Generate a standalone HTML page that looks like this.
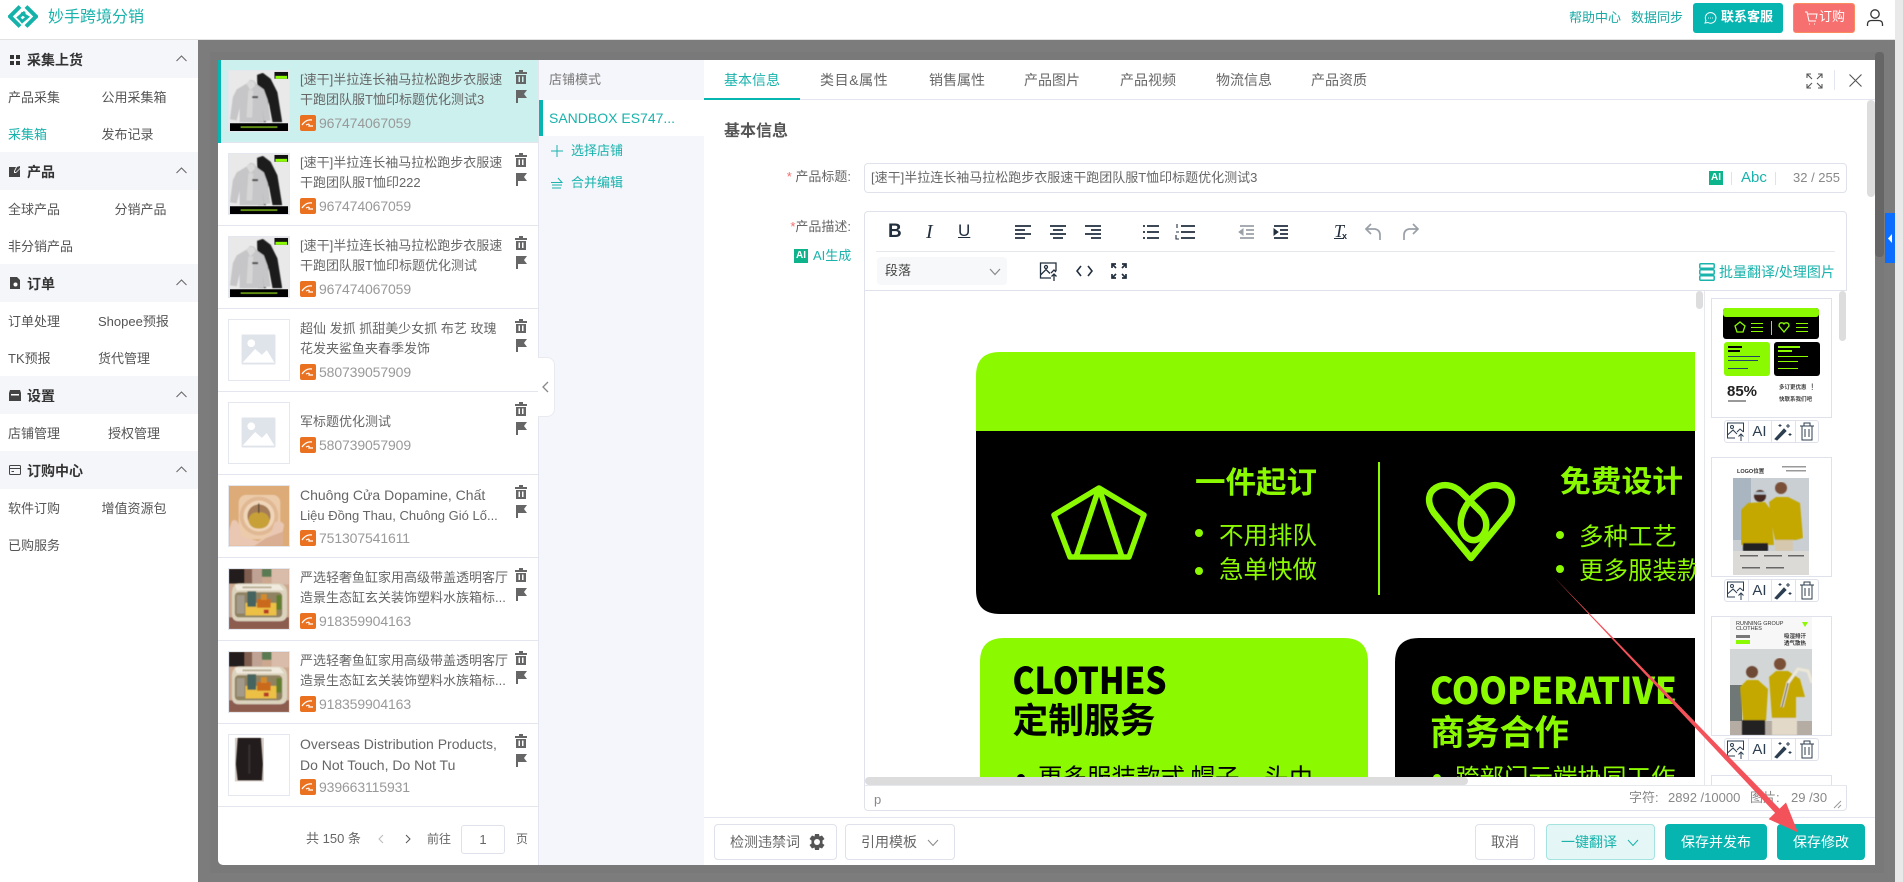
<!DOCTYPE html>
<html lang="zh-CN">
<head>
<meta charset="utf-8">
<title>妙手跨境分销</title>
<style>
html,body{margin:0;padding:0;width:1903px;height:882px;overflow:hidden;background:#fff;font-family:"Liberation Sans","Noto Sans CJK SC",sans-serif;color:#666}
*{box-sizing:border-box}
.a,.s,.it,.it>*,.tab,.btn,.lb{position:absolute}
.a,.s,.tab,.lb{white-space:nowrap}
.s{font-size:13px;line-height:20px;color:#555;margin-top:1px}
.sec{position:absolute;left:0;width:198px;height:38px;background:#f5f6fa}
.sec b{position:absolute;left:27px;top:10px;font-size:14px;line-height:20px;color:#333;font-weight:700}
.sec svg{position:absolute}
.it{left:218px;width:320px;height:83px;background:#fff;border-bottom:1px solid #e3e6ee}
.th{left:10px;top:10px;width:62px;height:62px;border:1px solid #e4e7ed;background:#fff;display:block}
.tt{left:82px;top:10px;font-size:13px;line-height:20px;color:#666;white-space:nowrap}
.tt span{font-size:14px}
.ali{left:82px;top:55px;width:16px;height:16px}
.id{left:101px;top:53px;font-size:14px;line-height:20px;color:#999;letter-spacing:-.12px}
.tr{left:297px;top:10px;width:12px;height:14px}
.fl{left:298px;top:30px;width:11px;height:13px}
.tab{top:70px;font-size:14px;line-height:20px;color:#666}
.btn{border:1px solid #dfe2ea;border-radius:4px;background:#fff;font-size:14px;line-height:34px;text-align:center;color:#666;white-space:nowrap}
.pri{background:#06b4b0;border-color:#06b4b0;color:#fff}
.lb{font-size:13px;line-height:20px;color:#666}
.lb i{color:#f56c6c;font-style:normal}
.box{position:absolute;left:1711px;width:121px;border:1px solid #dfe2ea;background:#fff}
.act{position:absolute;left:1724px;width:95px;height:23px;border:1px solid #dfe2ea;border-radius:3px;background:#fff}
.act svg{position:absolute;left:-1px;top:-1px}
.act span{position:absolute;left:23px;top:1px;width:23px;text-align:center;font-size:15px;line-height:20px;color:#2c3e50}
.act u{position:absolute;top:0;width:1px;height:21px;background:#dfe2ea}
.st{position:absolute;top:788px;font-size:13px;line-height:20px;color:#888;white-space:nowrap}
</style>
</head>
<body>
<svg width="0" height="0" style="position:absolute">
<defs>
<filter id="soft" x="0" y="0" width="100%" height="100%"><feGaussianBlur stdDeviation=".45"/></filter>
<symbol id="shirt" viewBox="0 0 62 62">
<rect width="62" height="62" fill="#e9e9e9"/>
<g filter="url(#soft)">
<path d="M29 4 35 2 43 8 50 22 55 53 45 53 41 32 38 53H30Z" fill="#1d1d1d"/>
<path d="M18 13 22 9 26 10 29 14 36 19 40 30 43 51 36 52 35 38 36 53H11L11 38 8 51 1 50 4 27 8 19Z" fill="#c6c6c8"/>
<path d="M18 13 22 10 26 11 27 15 22 20Z" fill="#dadada"/>
<path d="M20 20 25 20 24 48 18 48Z" fill="#d6d6d7"/>
<rect x="24" y="26" width="6" height="2" fill="#444"/>
</g>
<rect x="1" y="54" width="60" height="8" fill="#000"/>
<rect x="12" y="57" width="38" height="2" fill="#5f8e12"/>
<rect x="47" y="1" width="14" height="7" fill="#111"/>
<rect x="48" y="5" width="12" height="3" fill="#8bfa00"/>
</symbol>
<symbol id="placeholder" viewBox="0 0 62 62">
<rect x="13" y="15" width="35" height="31" rx="1" fill="#dfe3ea"/>
<circle cx="23" cy="24" r="4" fill="#fff"/>
<path d="M14 44 27 30 34 36 39 31 47 44Z" fill="#fff"/>
</symbol>
<symbol id="bell" viewBox="0 0 62 62">
<rect width="62" height="62" fill="#dcab78"/>
<g filter="url(#soft)">
<rect x="10" y="9" width="43" height="46" rx="8" fill="#eccbaa"/>
<circle cx="31" cy="31" r="20" fill="#e0b894"/>
<circle cx="31" cy="31" r="16" fill="#f0d5b8"/>
<circle cx="31" cy="31" r="12" fill="#a47c58"/>
<path d="M20 36Q21 27 31 27T42 36Q40 44 31 44T20 36Z" fill="#c8a038"/>
<rect x="30" y="18" width="1.500" height="10" fill="#5d4a30"/>
<path d="M0 62V46L3 36Q8 33 10 40L13 52 30 57 43 50 47 38Q53 34 57 40L55 50 50 62Z" fill="#e9c7b2"/>
<path d="M26 62 38 54 56 47V62Z" fill="#d9ae92"/>
</g>
</symbol>
<symbol id="tank" viewBox="0 0 62 62">
<rect width="62" height="62" fill="#cba88f"/>
<g filter="url(#soft)">
<rect width="16" height="15" fill="#231d1a"/>
<rect x="16" width="8" height="15" fill="#7f5d4f"/>
<rect x="24" width="10" height="15" fill="#bfa294"/>
<rect x="34" width="10" height="8" fill="#5a7a52"/>
<rect x="44" width="18" height="16" fill="#d9bca9"/>
<rect y="50" width="62" height="12" fill="#8c5b50"/>
<path d="M3 25Q3 15 12 15H50Q60 15 60 25V46Q60 54 52 54H10Q3 54 3 46Z" fill="#dcd3be"/>
<path d="M6 16H52L57 22H8Z" fill="#f1ebdf"/>
<rect x="14" y="18" width="30" height="2" fill="#b9ad96"/>
<rect x="6" y="24" width="49" height="26" rx="4" fill="#8f8260"/>
<rect x="17" y="35" width="32" height="13" fill="#ecc044"/>
<rect x="19" y="23" width="9" height="16" fill="#45645f"/>
<rect x="29" y="31" width="14" height="9" fill="#c9691f"/>
<rect x="33" y="26" width="6" height="6" fill="#d68b2a"/>
<rect x="8" y="27" width="8" height="19" fill="#a39a8c"/>
<rect x="49" y="27" width="5" height="15" fill="#5f7d2e"/>
<rect x="36" y="42" width="5" height="4" fill="#b8382a"/>
</g>
</symbol>
<symbol id="dress" viewBox="0 0 62 62">
<rect width="62" height="62" fill="#fff"/>
<rect x="6" y="3" width="30" height="45" fill="#d9cfc8"/>
<g filter="url(#soft)"><path d="M9 3H33L35 30 34 47H9L7 30Z" fill="#221e1c"/><rect x="20" y="10" width="2" height="30" fill="#3a3330"/></g>
</symbol>
<symbol id="ali" viewBox="0 0 16 16">
<rect width="16" height="16" rx="2" fill="#ea7120"/>
<path d="M2 10Q6 4 12 5M6 10Q10 8 9 11H13" fill="none" stroke="#fff" stroke-width="1.200"/>
</symbol>
<symbol id="trash" viewBox="0 0 12 14">
<path d="M4 0H8V2H12V4H0V2H4ZM1 5H11V14H1ZM3.500 6.500V12H5V6.500ZM7 6.500V12H8.500V6.500Z" fill="#666" fill-rule="evenodd"/>
</symbol>
<symbol id="flag" viewBox="0 0 11 13">
<path d="M0 0H11L8 4 11 8H2V13H0Z" fill="#666"/>
</symbol>
</defs>
</svg>

<!-- header -->
<div class="a" style="left:0;top:0;width:1895px;height:40px;background:#fff;border-bottom:1px solid #e2e2e2"></div>
<svg class="a" style="left:8px;top:5px" width="30" height="24" viewBox="0 0 30 24" fill="none" stroke="#15b2aa" stroke-width="4">
<path d="M12 1.500 2 11.500 12 21.500"/><path d="M18 1.500 28 11.500 18 21.500"/><path d="M17 7 10.500 12.500 14 16M13 8 19.500 12 13 17.500" stroke-width="3"/>
</svg>
<div class="a" style="left:48px;top:6px;font-size:16px;line-height:24px;color:#19b3ac">妙手跨境分销</div>
<div class="a" style="left:1569px;top:8px;font-size:13px;line-height:20px;color:#19a9a4">帮助中心</div>
<div class="a" style="left:1631px;top:8px;font-size:13px;line-height:20px;color:#19a9a4">数据同步</div>
<div class="a" style="left:1693px;top:3px;width:90px;height:30px;background:#06b4b0;border-radius:3px"></div>
<svg class="a" style="left:1703px;top:11px" width="14" height="14" viewBox="0 0 14 14" fill="none" stroke="#fff"><path d="M2 12 3 9.500A5.300 5.300 0 1 1 5 11.500Z"/><path d="M5 7H5.800M7 7H7.800M9 7H9.800"/></svg>
<div class="a" style="left:1721px;top:7px;font-size:13px;line-height:20px;color:#fff;font-weight:700">联系客服</div>
<div class="a" style="left:1793px;top:3px;width:62px;height:30px;background:#f67070;border:1px solid #f98b5f;border-radius:3px"></div>
<svg class="a" style="left:1804px;top:10px" width="14" height="16" viewBox="0 0 14 16" fill="none" stroke="#fff"><path d="M1 2H3L5 11H12M4 4H13L12 9"/><path d="M5 14H6M10 14H11"/></svg>
<div class="a" style="left:1819px;top:7px;font-size:13px;line-height:20px;color:#fff">订购</div>
<svg class="a" style="left:1866px;top:8px" width="18" height="19" viewBox="0 0 18 19" fill="none" stroke="#333" stroke-width="1.300"><circle cx="9" cy="6" r="4.200"/><path d="M1.500 18V16Q1.500 12.500 6 12.500H12Q16.500 12.500 16.500 16V18"/></svg>

<!-- sidebar -->
<div class="sec" style="top:40px"><svg style="left:10px;top:15px" width="10" height="10"><path d="M0 0H4V4H0ZM6 0H10V4H6ZM0 6H4V10H0ZM6 6H10V10H6Z" fill="#333"/></svg><b>采集上货</b><svg style="left:176px;top:15px" width="11" height="7"><path d="M.5 6 5.500 1 10.500 6" fill="none" stroke="#666"/></svg></div>
<div class="s" style="left:8px;top:87px">产品采集</div><div class="s" style="left:101.500px;top:87px">公用采集箱</div>
<div class="s" style="left:8px;top:124px;color:#19b3ac">采集箱</div><div class="s" style="left:101.500px;top:124px">发布记录</div>
<div class="sec" style="top:152px"><svg style="left:9px;top:14px" width="12" height="11"><path d="M0 1H7L5 5V7H7L11 3V11H0ZM8 1 11 0 11 2 7 6H6V5Z" fill="#444"/></svg><b>产品</b><svg style="left:176px;top:15px" width="11" height="7"><path d="M.5 6 5.500 1 10.500 6" fill="none" stroke="#666"/></svg></div>
<div class="s" style="left:8px;top:199px">全球产品</div><div class="s" style="left:114.500px;top:199px">分销产品</div>
<div class="s" style="left:8px;top:236px">非分销产品</div>
<div class="sec" style="top:264px"><svg style="left:10px;top:13px" width="10" height="12"><path d="M0 0H7L10 3V12H0Z" fill="#444"/><circle cx="5.500" cy="7.500" r="2" fill="#fff"/></svg><b>订单</b><svg style="left:176px;top:15px" width="11" height="7"><path d="M.5 6 5.500 1 10.500 6" fill="none" stroke="#666"/></svg></div>
<div class="s" style="left:8px;top:311px">订单处理</div><div class="s" style="left:98px;top:311px">Shopee预报</div>
<div class="s" style="left:8px;top:348px">TK预报</div><div class="s" style="left:98px;top:348px">货代管理</div>
<div class="sec" style="top:376px"><svg style="left:9px;top:14px" width="12" height="11"><path d="M1 0H11L12 3V11H0V3Z" fill="#444"/><rect x="2" y="4" width="8" height="1.500" fill="#fff"/></svg><b>设置</b><svg style="left:176px;top:15px" width="11" height="7"><path d="M.5 6 5.500 1 10.500 6" fill="none" stroke="#666"/></svg></div>
<div class="s" style="left:8px;top:423px">店铺管理</div><div class="s" style="left:108px;top:423px">授权管理</div>
<div class="sec" style="top:451px"><svg style="left:9px;top:14px" width="12" height="11" fill="none" stroke="#444"><rect x=".5" y=".5" width="11" height="9" rx="1"/><path d="M1 3.500H11M2.500 6.500H5"/></svg><b>订购中心</b><svg style="left:176px;top:15px" width="11" height="7"><path d="M.5 6 5.500 1 10.500 6" fill="none" stroke="#666"/></svg></div>
<div class="s" style="left:8px;top:498px">软件订购</div><div class="s" style="left:101.500px;top:498px">增值资源包</div>
<div class="s" style="left:8px;top:535px">已购服务</div>

<!-- overlay -->
<div class="a" style="left:198px;top:40px;width:1697px;height:842px;background:#7c7c7c"></div>
<div class="a" style="left:210px;top:52px;width:1674px;height:821px;background:#797979"></div>
<div class="a" style="left:1895px;top:0;width:8px;height:882px;background:#e9e9e9"></div>
<div class="a" style="left:1875px;top:52px;width:9px;height:205px;background:#666;border-radius:4px"></div>
<div class="a" style="left:1885px;top:213px;width:10px;height:50px;background:#0d6efd"></div>
<svg class="a" style="left:1888px;top:234px" width="5" height="9"><path d="M4 0V9L0 4.500Z" fill="#fff"/></svg>

<!-- modal -->
<div class="a" style="left:218px;top:60px;width:1657px;height:805px;background:#fff;border-radius:0 0 0 5px"></div>
<div class="a" style="left:538px;top:60px;width:166px;height:805px;background:#f5f6fb;border-left:1px solid #e3e6ee"></div>

<!-- list -->
<div class="it" style="top:60px;background:#cbf0ee"><svg class="th"><use href="#shirt"/></svg><div class="tt">[速干]半拉连长袖马拉松跑步衣服速<br>干跑团队服T恤印标题优化测试3</div><svg class="ali"><use href="#ali"/></svg><div class="id">967474067059</div><svg class="tr"><use href="#trash"/></svg><svg class="fl"><use href="#flag"/></svg></div>
<div class="a" style="left:218px;top:60px;width:3px;height:83px;background:#06b4b0"></div>
<div class="it" style="top:143px"><svg class="th"><use href="#shirt"/></svg><div class="tt">[速干]半拉连长袖马拉松跑步衣服速<br>干跑团队服T恤印222</div><svg class="ali"><use href="#ali"/></svg><div class="id">967474067059</div><svg class="tr"><use href="#trash"/></svg><svg class="fl"><use href="#flag"/></svg></div>
<div class="it" style="top:226px"><svg class="th"><use href="#shirt"/></svg><div class="tt">[速干]半拉连长袖马拉松跑步衣服速<br>干跑团队服T恤印标题优化测试</div><svg class="ali"><use href="#ali"/></svg><div class="id">967474067059</div><svg class="tr"><use href="#trash"/></svg><svg class="fl"><use href="#flag"/></svg></div>
<div class="it" style="top:309px"><svg class="th"><use href="#placeholder"/></svg><div class="tt">超仙 发抓 抓甜美少女抓 布艺 玫瑰<br>花发夹鲨鱼夹春季发饰</div><svg class="ali"><use href="#ali"/></svg><div class="id">580739057909</div><svg class="tr"><use href="#trash"/></svg><svg class="fl"><use href="#flag"/></svg></div>
<div class="it" style="top:392px"><svg class="th"><use href="#placeholder"/></svg><div class="tt" style="top:20px">军标题优化测试</div><svg class="ali" style="top:45px"><use href="#ali"/></svg><div class="id" style="top:43px">580739057909</div><svg class="tr"><use href="#trash"/></svg><svg class="fl"><use href="#flag"/></svg></div>
<div class="it" style="top:475px"><svg class="th"><use href="#bell"/></svg><div class="tt"><span>Chuông Cửa Dopamine, Chất</span><br>Liệu Đồng Thau, Chuông Gió Lố...</div><svg class="ali"><use href="#ali"/></svg><div class="id">751307541611</div><svg class="tr"><use href="#trash"/></svg><svg class="fl"><use href="#flag"/></svg></div>
<div class="it" style="top:558px"><svg class="th"><use href="#tank"/></svg><div class="tt">严选轻奢鱼缸家用高级带盖透明客厅<br>造景生态缸玄关装饰塑料水族箱标...</div><svg class="ali"><use href="#ali"/></svg><div class="id">918359904163</div><svg class="tr"><use href="#trash"/></svg><svg class="fl"><use href="#flag"/></svg></div>
<div class="it" style="top:641px"><svg class="th"><use href="#tank"/></svg><div class="tt">严选轻奢鱼缸家用高级带盖透明客厅<br>造景生态缸玄关装饰塑料水族箱标...</div><svg class="ali"><use href="#ali"/></svg><div class="id">918359904163</div><svg class="tr"><use href="#trash"/></svg><svg class="fl"><use href="#flag"/></svg></div>
<div class="it" style="top:724px"><svg class="th"><use href="#dress"/></svg><div class="tt"><span>Overseas Distribution Products,</span><br><span>Do Not Touch, Do Not Tu</span></div><svg class="ali"><use href="#ali"/></svg><div class="id">939663115931</div><svg class="tr"><use href="#trash"/></svg><svg class="fl"><use href="#flag"/></svg></div>

<!-- pagination -->
<div class="a" style="left:306px;top:829px;font-size:13px;line-height:20px;color:#666">共 150 条</div>
<svg class="a" style="left:378px;top:834px" width="6" height="10"><path d="M5 1 1 5 5 9" fill="none" stroke="#bbb"/></svg>
<svg class="a" style="left:405px;top:834px" width="6" height="10"><path d="M1 1 5 5 1 9" fill="none" stroke="#555"/></svg>
<div class="a" style="left:427px;top:829px;font-size:12px;line-height:20px;color:#666">前往</div>
<div class="a" style="left:461px;top:825px;width:44px;height:29px;border:1px solid #dfe2ea;border-radius:3px;text-align:center;font-size:13px;line-height:27px;color:#666">1</div>
<div class="a" style="left:516px;top:829px;font-size:12px;line-height:20px;color:#666">页</div>

<!-- collapse handle -->
<div class="a" style="left:538px;top:357px;width:17px;height:60px;background:#fff;border:1px solid #e8eaf0;border-left:0;border-radius:0 8px 8px 0"></div>
<svg class="a" style="left:542px;top:381px" width="7" height="12"><path d="M6 1 1 6 6 11" fill="none" stroke="#888" stroke-width="1.300"/></svg>

<!-- store panel -->
<div class="a" style="left:549px;top:70px;font-size:13px;line-height:20px;color:#777">店铺模式</div>
<div class="a" style="left:539px;top:100px;width:165px;height:36px;background:#fff"></div>
<div class="a" style="left:539px;top:100px;width:4px;height:36px;background:#06b4b0"></div>
<div class="a" style="left:549px;top:108px;font-size:14px;line-height:20px;color:#19b3ac">SANDBOX ES747...</div>
<svg class="a" style="left:551px;top:145px" width="12" height="12"><path d="M6 0V12M0 6H12" stroke="#19b3ac"/></svg>
<div class="a" style="left:571px;top:141px;font-size:13px;line-height:20px;color:#19b3ac">选择店铺</div>
<svg class="a" style="left:551px;top:177px" width="12" height="12" fill="none" stroke="#19b3ac"><path d="M0 5.500H11L7 1M1 8H11M1 11H10"/></svg>
<div class="a" style="left:571px;top:173px;font-size:13px;line-height:20px;color:#19b3ac">合并编辑</div>

<!-- tabs -->
<div class="a" style="left:704px;top:99px;width:1171px;height:1px;background:#e3e6ee"></div>
<div class="a" style="left:704px;top:98px;width:96px;height:2px;background:#06b4b0"></div>
<div class="tab" style="left:724px;color:#19b3ac">基本信息</div>
<div class="tab" style="left:820px;letter-spacing:.6px">类目&amp;属性</div>
<div class="tab" style="left:929px">销售属性</div>
<div class="tab" style="left:1024px">产品图片</div>
<div class="tab" style="left:1120px">产品视频</div>
<div class="tab" style="left:1216px">物流信息</div>
<div class="tab" style="left:1311px">产品资质</div>
<svg class="a" style="left:1806px;top:73px" width="17" height="16" fill="none" stroke="#555" stroke-width="1.100"><path d="M1 5V1H5M1 1 6 6M12 1H16V5M16 1 11 6M1 11V15H5M1 15 6 10M12 15H16V11M16 15 11 10"/></svg>
<div class="a" style="left:1834px;top:70px;width:1px;height:20px;background:#e3e6ee"></div>
<svg class="a" style="left:1849px;top:74px" width="13" height="13"><path d="M.5.500 12.500 12.500M12.500.500 .5 12.500" stroke="#555" stroke-width="1.100"/></svg>
<div class="a" style="left:1867px;top:100px;width:8px;height:97px;background:#ddd;border-radius:4px"></div>

<!-- form -->
<div class="a" style="left:724px;top:120px;font-size:16px;line-height:24px;font-weight:700;color:#555">基本信息</div>
<div class="lb" style="right:1052px;top:167px"><i>*</i> 产品标题:</div>
<div class="lb" style="right:1052px;top:217px"><i>*</i>产品描述:</div>
<svg class="a" style="left:794px;top:249px" width="14" height="14"><rect width="14" height="14" fill="#0db38a"/></svg>
<div class="a" style="left:796px;top:249px;font-size:10px;line-height:14px;font-weight:700;color:#fff">AI</div>
<div class="a" style="left:813px;top:246px;font-size:13px;line-height:20px;color:#19b3ac">AI生成</div>

<div class="a" style="left:864px;top:163px;width:983px;height:30px;border:1px solid #dfe2ea;border-radius:4px"></div>
<div class="a" style="left:871px;top:168px;font-size:13px;line-height:20px;color:#666">[速干]半拉连长袖马拉松跑步衣服速干跑团队服T恤印标题优化测试3</div>
<div class="a" style="left:1709px;top:171px;width:14px;height:14px;background:#0db38a;font-size:10px;line-height:14px;text-align:center;font-weight:700;color:#fff">AI</div>
<div class="a" style="left:1731px;top:172px;width:1px;height:13px;background:#dfe2ea"></div>
<div class="a" style="left:1741px;top:168px;font-size:15px;line-height:20px;color:#19b3ac">Abc</div>
<div class="a" style="left:1775px;top:172px;width:1px;height:13px;background:#dfe2ea"></div>
<div class="a" style="left:1793px;top:168px;font-size:13px;line-height:20px;color:#888">32 / 255</div>

<!-- editor -->
<div class="a" style="left:864px;top:211px;width:983px;height:600px;border:1px solid #dfe2ea;border-radius:4px"></div>
<div class="a" style="left:888px;top:221px;font-size:19px;line-height:22px;font-weight:700;color:#222f3e">B</div>
<div class="a" style="left:926px;top:221px;font-size:20px;line-height:22px;font-style:italic;color:#222f3e;font-family:'Liberation Serif',serif">I</div>
<div class="a" style="left:958px;top:220px;font-size:17px;line-height:22px;color:#222f3e;text-decoration:underline">U</div>
<svg class="a" style="left:1015px;top:224px" width="210" height="16" fill="none" stroke="#222f3e" stroke-width="1.800">
<path d="M0 2H16M0 6H10M0 10H16M0 14H10"/>
<path d="M35 2H51M38 6H48M35 10H51M38 14H48"/>
<path d="M70 2H86M76 6H86M70 10H86M76 14H86"/>
<path d="M132 2H144M132 8H144M132 14H144"/><path d="M128 2H130M128 8H130M128 14H130"/>
<path d="M166 2H180M166 8H180M166 14H180"/><path d="M162 0V4M161 8H164M161 11V15H164" stroke-width="1.100"/>
</svg>
<svg class="a" style="left:1238px;top:224px" width="52" height="16" fill="none" stroke-width="1.800">
<path d="M2 2H16M8 6H16M8 10H16M2 14H16" stroke="#9aa0a8"/><path d="M5 5 1 8 5 11Z" fill="#9aa0a8" stroke="#9aa0a8" stroke-width="1"/>
<path d="M36 2H50M42 6H50M42 10H50M36 14H50" stroke="#222f3e"/><path d="M36 5 40 8 36 11Z" fill="#222f3e" stroke="#222f3e" stroke-width="1"/>
</svg>
<div class="a" style="left:1334px;top:220px;font-size:18px;line-height:22px;font-style:italic;color:#222f3e;font-family:'Liberation Serif',serif;text-decoration:underline">T</div>
<div class="a" style="left:1342px;top:230px;font-size:9px;line-height:12px;color:#222f3e;font-weight:700">x</div>
<svg class="a" style="left:1365px;top:223px" width="56" height="18" fill="none" stroke="#9aa0a8" stroke-width="1.700">
<path d="M6 1 1 6 6 11M1 6H10Q15 7 15 12V17"/>
<path d="M48 1 53 6 48 11M53 6H44Q39 7 39 12V17"/>
</svg>
<div class="a" style="left:876px;top:251px;width:959px;height:1px;background:#e6e8ee"></div>
<div class="a" style="left:877px;top:257px;width:130px;height:28px;background:#f7f8f9;border-radius:4px"></div>
<div class="a" style="left:885px;top:261px;font-size:13px;line-height:20px;color:#444">段落</div>
<svg class="a" style="left:989px;top:268px" width="12" height="8"><path d="M1 1 6 6.500 11 1" fill="none" stroke="#888" stroke-width="1.200"/></svg>
<svg class="a" style="left:1039px;top:262px" width="20" height="19" fill="none" stroke="#222f3e" stroke-width="1.300"><path d="M12 16H1.500V1H17V9M1.500 13 7 7.500 11 11.500M12 11 15 8 17 10"/><circle cx="7" cy="5" r="1.500"/><path d="M15 19V12M12.500 14.500 15 12 17.500 14.500"/></svg>
<svg class="a" style="left:1076px;top:264px" width="17" height="14" fill="none" stroke="#222f3e" stroke-width="1.600"><path d="M5 2 1 7 5 12M12 2 16 7 12 12"/></svg>
<svg class="a" style="left:1111px;top:263px" width="16" height="16" fill="none" stroke="#222f3e" stroke-width="1.700"><path d="M1 5V1H5M1 1 5 5M11 1H15V5M15 1 11 5M1 11V15H5M1 15 5 11M11 15H15V11M15 15 11 11"/></svg>
<svg class="a" style="left:1699px;top:263px" width="16" height="18" fill="none" stroke="#19b3ac" stroke-width="1.500"><rect x=".8" y=".8" width="14.400" height="4.500" rx="1"/><rect x=".8" y="6.800" width="14.400" height="4.500" rx="1"/><rect x=".8" y="12.800" width="14.400" height="4.500" rx="1"/></svg>
<div class="a" style="left:1719px;top:262px;font-size:14px;line-height:20px;color:#19b3ac">批量翻译/处理图片</div>
<div class="a" style="left:865px;top:290px;width:981px;height:1px;background:#dfe2ea"></div>

<!-- editor image -->
<svg class="a" style="left:0;top:0" width="1903" height="882" viewBox="0 0 1903 882" font-family="'Noto Sans CJK SC','Liberation Sans',sans-serif">
<defs><clipPath id="ec"><rect x="865" y="291" width="830" height="486"/></clipPath></defs>
<g clip-path="url(#ec)">
<path d="M976 614V376Q976 352 1000 352H1760V431H976Z" fill="#8bfa00"/>
<path d="M976 431H1760V614H1000Q976 614 976 590Z" fill="#000"/>
<rect x="1378" y="462" width="2" height="133" fill="#8bfa00"/>
<g fill="none" stroke="#8bfa00" stroke-width="5.500" stroke-linejoin="round">
<path d="M1099 488 1144 515 1129 557H1070L1054 515Z"/><path d="M1099 488 1076 557M1099 488 1122 557"/>
<path stroke-width="6.500" d="M1471 558 1434 513C1418 490 1445 476 1461 492L1482 513C1494 528 1478 548 1466 537 1455 525 1462 505 1479 492 1495 476 1522 490 1508 513Z"/>
</g>
<g fill="#8bfa00">
<text x="1195" y="493" font-size="30" font-weight="700" textLength="122" lengthAdjust="spacingAndGlyphs">一件起订</text>
<circle cx="1199" cy="533" r="4"/><text x="1219" y="544" font-size="24.500" textLength="98" lengthAdjust="spacingAndGlyphs">不用排队</text>
<circle cx="1199" cy="571" r="4"/><text x="1219" y="578" font-size="24.500" textLength="98" lengthAdjust="spacingAndGlyphs">急单快做</text>
<text x="1560" y="492" font-size="30" font-weight="700" textLength="123" lengthAdjust="spacingAndGlyphs">免费设计</text>
<circle cx="1560" cy="535" r="4"/><text x="1579" y="545" font-size="24.500" textLength="98" lengthAdjust="spacingAndGlyphs">多种工艺</text>
<circle cx="1560" cy="569" r="4"/><text x="1579" y="579" font-size="24.500">更多服装款</text>
</g>
<path d="M980 790V662Q980 638 1004 638H1344Q1368 638 1368 662V790Z" fill="#8bfa00"/>
<path d="M1395 790V662Q1395 638 1419 638H1760V790Z" fill="#000"/>
<g fill="#000">
<text x="1012.500" y="694" font-size="37" font-weight="900" textLength="154" lengthAdjust="spacingAndGlyphs">CLOTHES</text>
<text x="1012.500" y="733" font-size="35" font-weight="700" textLength="143" lengthAdjust="spacingAndGlyphs">定制服务</text>
<circle cx="1021" cy="778" r="4"/><text x="1038" y="786" font-size="24.500">更多服装款式 帽子、头巾</text>
</g>
<g fill="#8bfa00">
<text x="1430" y="704" font-size="37" font-weight="900" textLength="247" lengthAdjust="spacingAndGlyphs">COOPERATIVE</text>
<text x="1430" y="745" font-size="35" font-weight="700" textLength="139" lengthAdjust="spacingAndGlyphs">商务合作</text>
<circle cx="1437" cy="778" r="4"/><text x="1455" y="786" font-size="24.500">跨部门云端协同工作</text>
</g>
</g>
</svg>
<div class="a" style="left:865px;top:777px;width:982px;height:8px;background:#fff"></div>
<div class="a" style="left:865px;top:777px;width:603px;height:8px;background:#dcdcdc;border-radius:4px"></div>

<!-- status bar -->
<div class="a" style="left:865px;top:785px;width:982px;height:1px;background:#e6e8ee"></div>
<div class="a" style="left:874px;top:790px;font-size:13px;line-height:20px;color:#888">p</div>
<div class="st" style="left:1629px">字符:</div>
<div class="st" style="left:1668px">2892 /10000</div>
<div class="st" style="left:1750px">图片:</div>
<div class="st" style="left:1791px">29 /30</div>
<svg class="a" style="left:1833px;top:800px" width="9" height="9"><path d="M1 8 8 1M5 8 8 5" stroke="#999"/></svg>

<!-- thumb panel -->
<div class="a" style="left:1704px;top:291px;width:143px;height:494px;background:#fff;border-left:1px solid #e6e8ee"></div>
<div class="a" style="left:1696px;top:291px;width:7px;height:18px;background:#ddd;border-radius:4px"></div>
<div class="a" style="left:1839px;top:291px;width:7px;height:50px;background:#ddd;border-radius:4px"></div>

<div class="box" style="top:298px;height:120px"></div>
<svg class="a" style="left:1712px;top:299px" width="119" height="118" viewBox="0 0 119 118">
<rect x="11" y="9" width="96" height="31" rx="3" fill="#000"/><rect x="11" y="9" width="96" height="9" rx="3" fill="#8bfa00"/>
<path d="M28 23 33 27 31 33H25L23 27Z" fill="none" stroke="#8bfa00" stroke-width="1.300"/><path d="M72 33 67 27Q67 23 71 24L72 25 73 24Q77 23 77 27Z" fill="none" stroke="#8bfa00" stroke-width="1.300"/>
<rect x="39" y="24" width="12" height="1" fill="#8bfa00"/><rect x="39" y="28" width="12" height="1" fill="#8bfa00"/><rect x="39" y="32" width="12" height="1" fill="#8bfa00"/>
<rect x="59" y="22" width="1" height="14" fill="#8bfa00"/>
<rect x="84" y="24" width="12" height="1" fill="#8bfa00"/><rect x="84" y="28" width="12" height="1" fill="#8bfa00"/><rect x="84" y="32" width="12" height="1" fill="#8bfa00"/>
<rect x="12" y="43" width="46" height="34" rx="3" fill="#8bfa00"/><rect x="62" y="43" width="46" height="34" rx="3" fill="#000"/>
<rect x="16" y="47" width="14" height="2" fill="#000"/><rect x="16" y="51" width="12" height="2" fill="#000"/><rect x="16" y="57" width="32" height="1" fill="#246"/><rect x="16" y="61" width="30" height="1" fill="#246"/><rect x="16" y="69" width="20" height="1" fill="#246"/>
<rect x="66" y="47" width="22" height="2" fill="#8bfa00"/><rect x="66" y="51" width="14" height="2" fill="#8bfa00"/><rect x="66" y="57" width="30" height="1" fill="#8bfa00"/><rect x="66" y="62" width="20" height="1" fill="#8bfa00"/><rect x="66" y="69" width="20" height="1" fill="#8bfa00"/>
<text x="15" y="97" font-size="15" font-weight="700" fill="#222" font-family="Liberation Sans">85%</text>
<rect x="16" y="101" width="18" height="2" fill="#999"/>
<text x="67" y="90" font-size="5.500" font-weight="700" fill="#444">多订更优惠</text><text x="99" y="91" font-size="9" fill="#333">!</text>
<text x="67" y="102" font-size="5.500" font-weight="700" fill="#444">快联系我们吧</text>
</svg>
<div class="act" style="top:420px"><svg width="95" height="23" fill="none" stroke="#2c3e50"><path d="M11 18H3.500V3H19.500V12M3.500 15 9 10 13 14M13 12 16 9 19.500 12M17 21V14M14.500 16.500 17 14 19.500 16.500"/><circle cx="8" cy="7" r="1.500"/><path d="M51 19 60 9 62 11 53 20Z" fill="#2c3e50"/><path d="M64 4V8M62 6H66M56 4V7M54.500 5.500H57.500M66 13V16M64.500 14.500H67.500"/><path d="M76 6H90M80 6V3H86V6M78 6V20H88V6M81 9V17M85 9V17"/></svg><span>AI</span><u style="left:23px"></u><u style="left:46px"></u><u style="left:70px"></u></div>

<div class="box" style="top:457px;height:120px"></div>
<svg class="a" style="left:1712px;top:458px" width="119" height="118" viewBox="0 0 119 118">
<text x="25" y="15" font-size="5.500" font-weight="700" fill="#333">LOGO位置</text><rect x="70" y="8" width="24" height="1.500" fill="#999"/><rect x="74" y="12" width="20" height="1.500" fill="#999"/>
<rect x="21" y="20" width="76" height="97" fill="#c9cfd3"/><rect x="21" y="20" width="18" height="62" fill="#a9b6c2"/>
<g filter="url(#soft)">
<circle cx="48" cy="38" r="6" fill="#4a2a22"/><rect x="42" y="34" width="12" height="2.500" fill="#b9c2cc"/>
<path d="M29 52 36 45 53 44 59 52 62 87H29Z" fill="#c4a806"/>
<circle cx="69" cy="30" r="6" fill="#7a4f38"/><path d="M57 44 64 39 76 39 88 45 91 80 84 82H63L59 62Z" fill="#c4a806"/>
<rect x="31" y="85" width="25" height="8" fill="#222"/><rect x="63" y="82" width="18" height="11" fill="#d5c8ae"/>
</g>
<rect x="21" y="93" width="76" height="24" fill="#dcdad6"/>
<rect x="28" y="97" width="18" height="1.500" fill="#666"/><rect x="52" y="97" width="18" height="1.500" fill="#666"/><rect x="76" y="97" width="16" height="1.500" fill="#666"/><rect x="30" y="109" width="18" height="1.500" fill="#666"/><rect x="54" y="109" width="18" height="1.500" fill="#666"/>
</svg>
<div class="act" style="top:579px"><svg width="95" height="23" fill="none" stroke="#2c3e50"><path d="M11 18H3.500V3H19.500V12M3.500 15 9 10 13 14M13 12 16 9 19.500 12M17 21V14M14.500 16.500 17 14 19.500 16.500"/><circle cx="8" cy="7" r="1.500"/><path d="M51 19 60 9 62 11 53 20Z" fill="#2c3e50"/><path d="M64 4V8M62 6H66M56 4V7M54.500 5.500H57.500M66 13V16M64.500 14.500H67.500"/><path d="M76 6H90M80 6V3H86V6M78 6V20H88V6M81 9V17M85 9V17"/></svg><span>AI</span><u style="left:23px"></u><u style="left:46px"></u><u style="left:70px"></u></div>

<div class="box" style="top:616px;height:120px"></div>
<svg class="a" style="left:1712px;top:617px" width="119" height="118" viewBox="0 0 119 118">
<rect x="18" y="0" width="82" height="32" fill="#f7f7f7"/>
<text x="24" y="8" font-size="5.500" fill="#333" font-family="Liberation Sans">RUNNING GROUP</text><text x="24" y="13" font-size="5.500" fill="#333" font-family="Liberation Sans">CLOTHES</text>
<path d="M90 5H96L93 10Z" fill="#8bfa00"/><rect x="24" y="18" width="14" height="3" fill="#777"/><rect x="24" y="23" width="14" height="4" fill="#8bfa00"/>
<text x="72" y="21" font-size="5.500" font-weight="700" fill="#333">吸湿排汗</text><text x="72" y="28" font-size="5.500" font-weight="700" fill="#333">透气散热</text>
<rect x="18" y="32" width="82" height="86" fill="#d3d6d6"/><rect x="18" y="68" width="12" height="36" fill="#6f7877"/><rect x="18" y="104" width="82" height="14" fill="#b5aca3"/>
<g filter="url(#soft)">
<circle cx="40" cy="55" r="6" fill="#6e4a36"/><path d="M28 70 35 63 46 63 56 72 54 104H31Z" fill="#c4a806"/><rect x="30" y="103" width="23" height="15" fill="#222"/>
<circle cx="68" cy="47" r="6" fill="#7a4f38"/><path d="M57 60 64 54 76 54 88 62 93 80 84 80 84 102H60Z" fill="#c4a806"/><rect x="60" y="101" width="25" height="17" fill="#e2d9c8"/>
<path d="M70 90 76 66 86 52 96 54 100 66" fill="none" stroke="#ece7d8" stroke-width="3"/>
<path d="M70 90 76 66" fill="none" stroke="#333" stroke-width="1"/>
</g>
</svg>
<div class="act" style="top:738px"><svg width="95" height="23" fill="none" stroke="#2c3e50"><path d="M11 18H3.500V3H19.500V12M3.500 15 9 10 13 14M13 12 16 9 19.500 12M17 21V14M14.500 16.500 17 14 19.500 16.500"/><circle cx="8" cy="7" r="1.500"/><path d="M51 19 60 9 62 11 53 20Z" fill="#2c3e50"/><path d="M64 4V8M62 6H66M56 4V7M54.500 5.500H57.500M66 13V16M64.500 14.500H67.500"/><path d="M76 6H90M80 6V3H86V6M78 6V20H88V6M81 9V17M85 9V17"/></svg><span>AI</span><u style="left:23px"></u><u style="left:46px"></u><u style="left:70px"></u></div>

<div class="box" style="top:775px;height:10px;border-bottom:0"></div>

<!-- footer -->
<div class="a" style="left:704px;top:817px;width:1171px;height:1px;background:#e3e6ee"></div>
<div class="btn" style="left:714px;top:824px;width:123px;height:36px;text-align:left;padding-left:15px">检测违禁词</div>
<svg class="a" style="left:808px;top:833px" width="18" height="18" viewBox="0 0 18 18"><path d="M7 1H11L11.500 3.500 14 2.500 16.500 6 14.500 7.500V10.500L16.500 12 14 15.500 11.500 14.500 11 17H7L6.500 14.500 4 15.500 1.500 12 3.500 10.500V7.500L1.500 6 4 2.500 6.500 3.500Z" fill="#555"/><circle cx="9" cy="9" r="3" fill="#fff"/></svg>
<div class="btn" style="left:845px;top:824px;width:110px;height:36px;text-align:left;padding-left:15px">引用模板</div>
<svg class="a" style="left:927px;top:839px" width="12" height="8"><path d="M1 1 6 6.500 11 1" fill="none" stroke="#888"/></svg>
<div class="btn" style="left:1475px;top:824px;width:60px;height:36px">取消</div>
<div class="btn" style="left:1546px;top:824px;width:109px;height:36px;background:#e4f6f5;border-color:#a5e3e0;color:#19b3ac;text-align:left;padding-left:14px">一键翻译</div>
<svg class="a" style="left:1627px;top:839px" width="12" height="8"><path d="M1 1 6 6.500 11 1" fill="none" stroke="#19b3ac"/></svg>
<div class="btn pri" style="left:1665px;top:824px;width:102px;height:36px">保存并发布</div>
<div class="btn pri" style="left:1777px;top:824px;width:88px;height:36px">保存修改</div>

<!-- red annotation arrow -->
<svg class="a" style="left:0;top:0" width="1903" height="882">
<polygon points="1553.600,576.600 1779.500,808.700 1786,802.500 1798,832.500 1768.600,819.100 1775.100,812.900" fill="#f4525a"/>
</svg>
</body>
</html>
